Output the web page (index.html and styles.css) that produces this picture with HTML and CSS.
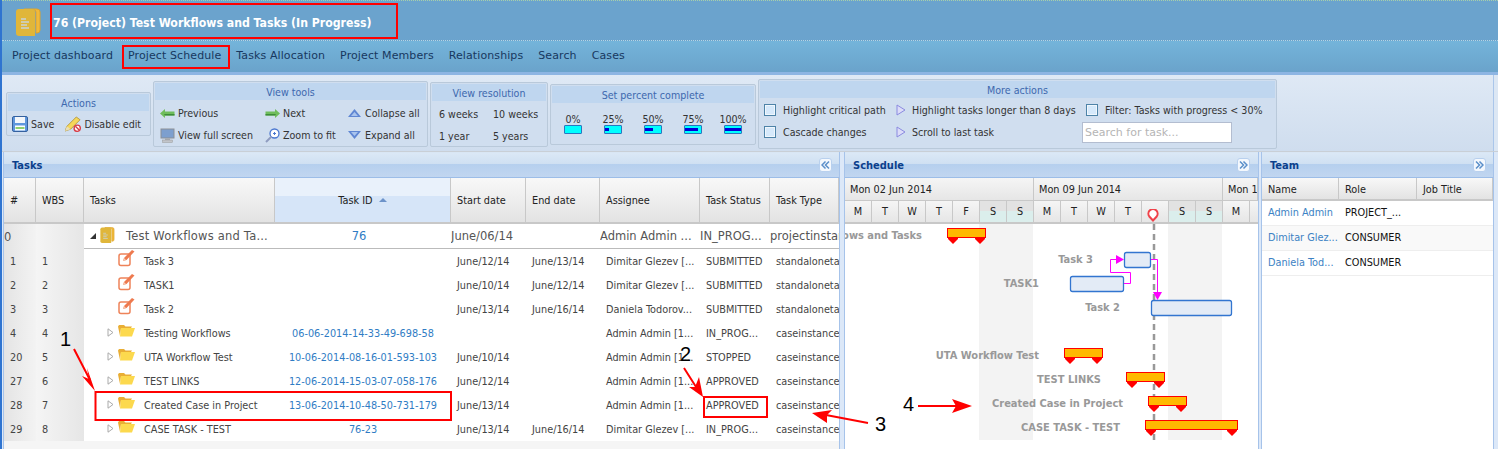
FILE: index.html
```html
<!DOCTYPE html>
<html lang="en">

<head>
    <meta charset="UTF-8">
    <title>Project Schedule</title>
    <link rel="stylesheet" href="styles.css">
</head>

<body>
    <!-- Shared icons -->
    <svg class="defs" width="0" height="0">
        <symbol id="i-book" viewBox="0 0 25 28">
            <path d="M8 1h13a3 3 0 0 1 3 3v18a3 3 0 0 1-3 3h-1V4a2 2 0 0 0-2-2H8z" fill="#f1b93a" stroke="#dca32e" />
            <path d="M3 1h13a3 3 0 0 1 3 3v24H3a3 3 0 0 1-3-3V4a3 3 0 0 1 3-3z" fill="#e0b63a" />
            <path d="M5 11h5M5 14h8M5 17h6M5 20h8" stroke="#c9d4d8" stroke-width="1.3" />
        </symbol>
        <symbol id="i-edit" viewBox="0 0 17 17">
            <rect x="1" y="4" width="11" height="11.5" rx="2" fill="#fff" stroke="#ee8359" stroke-width="1.5" />
            <path d="M5 11l1-3 8-8 2.500 1.500-8 8.500z" fill="#ee7a4f" />
            <path d="M5 11l1-3 2 2z" fill="#f8c9b3" />
        </symbol>
        <symbol id="i-folder" viewBox="0 0 17 13">
            <path d="M2 12L0 2.500 1 1h5l1.500 1.500H14L13 4H3z" fill="#e9ae35" />
            <path d="M3 4h14l-3 8.500H2z" fill="#fcd94e" />
        </symbol>
        <symbol id="i-open" viewBox="0 0 7 9">
            <path d="M1 .8L6 4.500 1 8.200z" fill="#fff" stroke="#aaa" />
        </symbol>
        <symbol id="i-play" viewBox="0 0 10 12">
            <path d="M1 1l8 5-8 5z" fill="#dcdcf8" stroke="#8a8ae0" />
        </symbol>
        <symbol id="i-left" viewBox="0 0 15 9">
            <path d="M0 4.500L5 0v2.500h9.500v4H5V9z" fill="#6fbd5d" />
            <path d="M5 6.500h9.500V5H4z" fill="#3d8c3a" />
        </symbol>
        <symbol id="i-chevrons" viewBox="0 0 9 9">
            <path d="M4.500 1L1 4.500 4.500 8M8 1L4.500 4.500 8 8" fill="none" stroke="#5b8fca" stroke-width="1.500" />
        </symbol>
        <path id="tick" d="M-5 0H5V1L0 6L-5 1Z" fill="#f00" />
    </svg>

    <div class="page">
        <header class="title-bar">
            <svg class="title-icon"><use href="#i-book" /></svg>
            <h1>76 (Project) Test Workflows and Tasks (In Progress)</h1>
        </header>

        <nav class="menu">
            <a>Project dashboard</a>
            <a>Project Schedule</a>
            <a>Tasks Allocation</a>
            <a>Project Members</a>
            <a>Relationships</a>
            <a>Search</a>
            <a>Cases</a>
        </nav>
        <div class="menu-edge"></div>

        <!-- Toolbar groups -->
        <section class="toolbar">
            <div class="group group-actions">
                <div class="group-title">Actions</div>
                <div class="tool-row">
                    <span class="tool">
                        <svg class="icon" viewBox="0 0 16 16">
                            <rect x=".5" y=".5" width="15" height="15" rx="1.500" fill="#5f97dd" stroke="#35619f" />
                            <rect x="3" y="1" width="10" height="6" fill="#f4f7fb" />
                            <rect x="3" y="9.500" width="10" height="5" fill="#fff" />
                            <rect x="3.500" y="11" width="9" height="2" fill="#8fcf6f" />
                        </svg>
                        Save
                    </span>
                    <span class="tool tool-edit">
                        <svg class="icon" viewBox="0 0 17 17">
                            <path d="M0 16l2-5L12 1l4 3L6 14z" fill="#f5d75a" stroke="#a98b2e" stroke-width=".8" />
                            <path d="M0 16l2-5 4 3z" fill="#eadfb8" />
                            <circle cx="13" cy="13" r="3.300" fill="#fff" stroke="#d8414a" stroke-width="1.500" />
                            <path d="M11 11l4 4" stroke="#d8414a" stroke-width="1.500" />
                        </svg>
                        Disable edit
                    </span>
                </div>
            </div>

            <div class="group group-view">
                <div class="group-title">View tools</div>
                <div class="view-grid">
                    <span class="tool"><svg class="icon arrow"><use href="#i-left" /></svg>Previous</span>
                    <span class="tool"><svg class="icon arrow flip"><use href="#i-left" /></svg>Next</span>
                    <span class="tool">
                        <svg class="icon tri" viewBox="0 0 13 8"><path d="M6.500 0L13 8H0z" fill="#5f86d3" /><path d="M6.500 3L10 7H3z" fill="#a9c4ee" /></svg>
                        Collapse all
                    </span>
                    <span class="tool">
                        <svg class="icon" viewBox="0 0 15 15">
                            <rect x="1" y="1" width="13" height="9" fill="#7d9fce" stroke="#8b8f96" />
                            <rect x="5" y="10" width="5" height="2" fill="#a9adb3" />
                            <rect x="2.500" y="12" width="10" height="2.500" fill="#c2c5ca" stroke="#999" stroke-width=".5" />
                        </svg>
                        View full screen
                    </span>
                    <span class="tool">
                        <svg class="icon" viewBox="0 0 15 15">
                            <circle cx="9.500" cy="5.500" r="4.500" fill="#fff" stroke="#4a77d0" stroke-width="1.300" />
                            <path d="M6.500 8.500L1 14" stroke="#8f9cc0" stroke-width="2" />
                            <path d="M8 5.500h3M9.500 4v3" stroke="#4a77d0" />
                        </svg>
                        Zoom to fit
                    </span>
                    <span class="tool">
                        <svg class="icon tri" viewBox="0 0 13 8"><path d="M6.500 8L13 0H0z" fill="#5f86d3" /><path d="M6.500 5L10 1H3z" fill="#a9c4ee" /></svg>
                        Expand all
                    </span>
                </div>
            </div>

            <div class="group group-res">
                <div class="group-title">View resolution</div>
                <div class="res-grid">
                    <span>6 weeks</span><span>10 weeks</span>
                    <span>1 year</span><span>5 years</span>
                </div>
            </div>

            <div class="group group-percent">
                <div class="group-title">Set percent complete</div>
                <div class="percent-row">
                    <div class="percent"><span>0%</span><div class="bar"><i style="width:0"></i></div></div>
                    <div class="percent"><span>25%</span><div class="bar"><i style="width:4px"></i></div></div>
                    <div class="percent"><span>50%</span><div class="bar"><i style="width:8px"></i></div></div>
                    <div class="percent"><span>75%</span><div class="bar"><i style="width:13px"></i></div></div>
                    <div class="percent"><span>100%</span><div class="bar"><i style="width:16px"></i></div></div>
                </div>
            </div>

            <div class="group group-more">
                <div class="group-title">More actions</div>
                <div class="more-grid">
                    <span class="tool"><i class="check"></i>Highlight critical path</span>
                    <span class="tool"><svg class="play"><use href="#i-play" /></svg>Highlight tasks longer than 8 days</span>
                    <span class="tool"><i class="check"></i>Filter: Tasks with progress &lt; 30%</span>
                    <span class="tool"><i class="check"></i>Cascade changes</span>
                    <span class="tool"><svg class="play"><use href="#i-play" /></svg>Scroll to last task</span>
                    <input class="search" placeholder="Search for task...">
                </div>
            </div>
        </section>

        <main class="panels">
            <!-- Tasks -->
            <section class="panel panel-tasks">
                <div class="panel-head">
                    <h2>Tasks</h2>
                    <svg class="collapse"><use href="#i-chevrons" /></svg>
                </div>
                <table class="tasks">
                    <colgroup>
                        <col class="c-num"><col class="c-wbs"><col class="c-name"><col class="c-id">
                        <col class="c-start"><col class="c-end"><col class="c-who"><col class="c-status"><col class="c-type">
                    </colgroup>
                    <thead>
                        <tr>
                            <th>#</th><th>WBS</th><th>Tasks</th>
                            <th class="sorted">Task ID <b class="sort-up"></b></th>
                            <th>Start date</th><th>End date</th><th>Assignee</th><th>Task Status</th><th>Task Type</th>
                        </tr>
                    </thead>
                    <tbody>
                        <tr class="root">
                            <td class="num">0</td><td class="wbs"></td>
                            <td><div class="tree tree-root"><b class="open-mark"></b><svg class="book"><use href="#i-book" /></svg>Test Workflows and Ta...</div></td>
                            <td class="id">76</td><td>June/06/14</td><td></td><td>Admin Admin ...</td><td>IN_PROG...</td><td>projectinstance</td>
                        </tr>
                        <tr>
                            <td class="num">1</td><td class="wbs">1</td>
                            <td><div class="tree"><svg class="edit"><use href="#i-edit" /></svg>Task 3</div></td>
                            <td class="id"></td><td>June/12/14</td><td>June/13/14</td><td>Dimitar Glezev [...</td><td>SUBMITTED</td><td>standalonetask</td>
                        </tr>
                        <tr>
                            <td class="num">2</td><td class="wbs">2</td>
                            <td><div class="tree"><svg class="edit"><use href="#i-edit" /></svg>TASK1</div></td>
                            <td class="id"></td><td>June/10/14</td><td>June/12/14</td><td>Dimitar Glezev [...</td><td>SUBMITTED</td><td>standalonetask</td>
                        </tr>
                        <tr>
                            <td class="num">3</td><td class="wbs">3</td>
                            <td><div class="tree"><svg class="edit"><use href="#i-edit" /></svg>Task 2</div></td>
                            <td class="id"></td><td>June/13/14</td><td>June/16/14</td><td>Daniela Todorov...</td><td>SUBMITTED</td><td>standalonetask</td>
                        </tr>
                        <tr>
                            <td class="num">4</td><td class="wbs">4</td>
                            <td><div class="tree"><svg class="open"><use href="#i-open" /></svg><svg class="folder"><use href="#i-folder" /></svg>Testing Workflows</div></td>
                            <td class="id">06-06-2014-14-33-49-698-58</td><td></td><td></td><td>Admin Admin [1...</td><td>IN_PROG...</td><td>caseinstance</td>
                        </tr>
                        <tr>
                            <td class="num">20</td><td class="wbs">5</td>
                            <td><div class="tree"><svg class="open"><use href="#i-open" /></svg><svg class="folder"><use href="#i-folder" /></svg>UTA Workflow Test</div></td>
                            <td class="id">10-06-2014-08-16-01-593-103</td><td>June/10/14</td><td></td><td>Admin Admin [1...</td><td>STOPPED</td><td>caseinstance</td>
                        </tr>
                        <tr>
                            <td class="num">27</td><td class="wbs">6</td>
                            <td><div class="tree"><svg class="open"><use href="#i-open" /></svg><svg class="folder"><use href="#i-folder" /></svg>TEST LINKS</div></td>
                            <td class="id">12-06-2014-15-03-07-058-176</td><td>June/12/14</td><td></td><td>Admin Admin [1...</td><td>APPROVED</td><td>caseinstance</td>
                        </tr>
                        <tr>
                            <td class="num">28</td><td class="wbs">7</td>
                            <td><div class="tree"><svg class="open"><use href="#i-open" /></svg><svg class="folder"><use href="#i-folder" /></svg>Created Case in Project</div></td>
                            <td class="id">13-06-2014-10-48-50-731-179</td><td>June/13/14</td><td></td><td>Admin Admin [1...</td><td>APPROVED</td><td>caseinstance</td>
                        </tr>
                        <tr>
                            <td class="num">29</td><td class="wbs">8</td>
                            <td><div class="tree"><svg class="open"><use href="#i-open" /></svg><svg class="folder"><use href="#i-folder" /></svg>CASE TASK - TEST</div></td>
                            <td class="id">76-23</td><td>June/13/14</td><td>June/16/14</td><td>Dimitar Glezev [...</td><td>IN_PROG...</td><td>caseinstance</td>
                        </tr>
                    </tbody>
                </table>
            </section>

            <!-- Schedule -->
            <section class="panel panel-schedule">
                <div class="panel-head">
                    <h2>Schedule</h2>
                    <svg class="collapse flip"><use href="#i-chevrons" /></svg>
                </div>
                <div class="weeks">
                    <span>Mon 02 Jun 2014</span>
                    <span>Mon 09 Jun 2014</span>
                    <span>Mon 16 Jun 2014</span>
                </div>
                <div class="days">
                    <span>M</span><span>T</span><span>W</span><span>T</span><span>F</span>
                    <span class="off">S</span><span class="off">S</span>
                    <span>M</span><span>T</span><span>W</span><span>T</span>
                    <span class="today">
                        <svg viewBox="0 0 12 13"><path d="M6 11.500L2.300 7.500a4.600 4.600 0 1 1 7.400 0z" fill="#fff" stroke="#f0424a" stroke-width="2" /></svg>
                    </span>
                    <span class="off">S</span><span class="off">S</span>
                    <span>M</span><span>T</span>
                </div>
                <svg class="gantt" viewBox="0 0 413 225">
                    <rect class="weekend" x="134" y="0" width="54" height="216" />
                    <rect class="weekend" x="323" y="0" width="54" height="216" />
                    <path class="today-line" d="M309 0V216" />

                    <text class="label" x="77" y="15">Test Workflows and Tasks</text>
                    <text class="label" x="248" y="39">Task 3</text>
                    <text class="label" x="194" y="63">TASK1</text>
                    <text class="label" x="275" y="87">Task 2</text>
                    <text class="label" x="194" y="135">UTA Workflow Test</text>
                    <text class="label" x="256" y="159">TEST LINKS</text>
                    <text class="label" x="278" y="183">Created Case in Project</text>
                    <text class="label" x="275" y="207">CASE TASK - TEST</text>

                    <rect class="task" x="279.500" y="28.500" width="26" height="15" rx="2" />
                    <rect class="task" x="225.500" y="52.500" width="53" height="15" rx="2" />
                    <rect class="task" x="306.500" y="76.500" width="80" height="15" rx="2" />

                    <rect class="case" x="102.500" y="4.500" width="38" height="9" />
                    <rect class="case" x="219.500" y="124.500" width="38" height="9" />
                    <rect class="case" x="281.500" y="148.500" width="38" height="9" />
                    <rect class="case" x="303.500" y="172.500" width="38" height="9" />
                    <rect class="case" x="300.500" y="196.500" width="92" height="9" />

                    <use href="#tick" x="108" y="14" /><use href="#tick" x="135" y="14" />
                    <use href="#tick" x="225" y="134" /><use href="#tick" x="252" y="134" />
                    <use href="#tick" x="287" y="158" /><use href="#tick" x="314" y="158" />
                    <use href="#tick" x="309" y="182" /><use href="#tick" x="336" y="182" />
                    <use href="#tick" x="306" y="206" /><use href="#tick" x="387" y="206" />

                    <path class="link" d="M279 59.500h6.500V48.500H265.500V35.500H272" />
                    <path class="link-head" d="M271 31l8 4.500-8 4.500z" />
                    <path class="link" d="M306 35.500h6.500V69" />
                    <path class="link-head" d="M308 68h9l-4.500 8z" />
                </svg>
            </section>

            <!-- Team -->
            <section class="panel panel-team">
                <div class="panel-head">
                    <h2>Team</h2>
                    <svg class="collapse flip"><use href="#i-chevrons" /></svg>
                </div>
                <table class="team">
                    <colgroup><col class="t-name"><col class="t-role"><col class="t-job"></colgroup>
                    <thead>
                        <tr><th>Name</th><th>Role</th><th>Job Title</th></tr>
                    </thead>
                    <tbody>
                        <tr><td class="person">Admin Admin</td><td>PROJECT_...</td><td></td></tr>
                        <tr><td class="person">Dimitar Glez...</td><td>CONSUMER</td><td></td></tr>
                        <tr><td class="person">Daniela Tod...</td><td>CONSUMER</td><td></td></tr>
                    </tbody>
                </table>
            </section>
        </main>

        <!-- Red callouts drawn over the screenshot -->
        <svg class="marks" viewBox="0 0 1498 449">
            <rect x="51" y="4" width="346" height="34" />
            <rect x="123" y="46" width="106" height="22" />
            <rect x="95.500" y="392" width="355.500" height="28" />
            <rect x="704" y="397" width="63" height="20" />

            <path d="M74 349L90 380M684 368L698 390M868 423L826 415M918 406H958" />
            <polygon points="95,391 82,376 89,379 87,368" />
            <polygon points="703,397 689,387 695,387 699,377" />
            <polygon points="812,413 832,410 827,415 827,423" />
            <polygon points="972,406 952,399 956,406 952,413" />

            <text x="60" y="346">1</text>
            <text x="680" y="361">2</text>
            <text x="875" y="431">3</text>
            <text x="903" y="411">4</text>
        </svg>
    </div>
</body>

</html>
```

FILE: styles.css
```css
/* Page */
body {
    margin: 0;
    font-family: "DejaVu Sans Condensed", "DejaVu Sans", sans-serif;
    font-size: 10.8px;
    color: #333;
}

.defs {
    position: absolute;
}

.page {
    position: relative;
    width: 1498px;
    height: 449px;
    overflow: hidden;
    box-sizing: border-box;
    border-left: 2px solid #2f74d0;
    background: #dce7f4;
}

/* Title + menu */
.title-bar {
    display: flex;
    align-items: center;
    height: 41px;
    box-sizing: border-box;
    padding: 4px 0 0 14px;
    background: #6ba3cd;
    border-top: 1px dotted #a7cfa9;
    border-bottom: 1px dotted #b5d5e4;
}

.title-icon {
    width: 25px;
    height: 28px;
    margin-top: -2px;
}

h1 {
    margin: 0 0 0 12px;
    font-size: 12.2px;
    font-weight: bold;
    color: #fff;
}

.menu {
    display: flex;
    align-items: center;
    gap: 15px;
    height: 31px;
    padding: 0 0 2px 10px;
    box-sizing: border-box;
    background: linear-gradient(#74b4da, #6aa3cb);
    font-family: "DejaVu Sans", sans-serif;
    font-size: 11px;
    letter-spacing: .1px;
    color: #17385f;
}

.menu-edge {
    height: 3px;
    background: #8db5e3;
}

/* Toolbar */
.toolbar {
    display: flex;
    align-items: center;
    gap: 2px;
    height: 76px;
    padding: 2px 0 0 4px;
    box-sizing: border-box;
    font-size: 10.6px;
    background: linear-gradient(#dfe9f5, #cfddee);
    border-right: 1px solid #aac6ea;
    margin-right: 4px;
}

.group {
    box-sizing: border-box;
    background: #d0deef;
    border: 1px solid #b9c9da;
    border-radius: 2px;
    padding: 1px;
}

.group-title {
    height: 17px;
    line-height: 18px;
    text-align: center;
    color: #3d68ae;
    background: #bfd6ef;
}

.group-actions { width: 145px; height: 44px; }
.group-view { width: 275px; height: 66px; }
.group-res { width: 118px; height: 65px; }
.group-percent { width: 206px; height: 61px; }
.group-more { width: 519px; height: 70px; }

.tool {
    display: flex;
    align-items: center;
    white-space: nowrap;
}

.icon {
    flex: none;
    width: 15px;
    height: 15px;
    margin-right: 3px;
}

.icon.arrow {
    height: 9px;
}

.icon.tri {
    width: 13px;
    height: 8px;
    margin-right: 4px;
}

.flip {
    transform: scaleX(-1);
}

.tool-row {
    display: flex;
    gap: 11px;
    padding: 5px 0 0 4px;
}

.tool-row .icon {
    width: 16px;
    height: 16px;
}

.view-grid {
    display: grid;
    grid-template-columns: 105px 83px auto;
    grid-auto-rows: 22px;
    align-items: center;
    padding: 2px 0 0 5px;
}

.res-grid {
    display: grid;
    grid-template-columns: 54px auto;
    grid-auto-rows: 22px;
    align-items: center;
    padding: 2px 0 0 7px;
}

.percent-row {
    display: flex;
    padding: 10px 0 0 1px;
}

.percent {
    display: flex;
    flex-direction: column;
    align-items: center;
    width: 40px;
    line-height: 12px;
}

.bar {
    width: 16px;
    height: 3px;
    padding: 2px 0;
    background: #0ff;
    border: 1px solid #2a76c0;
    border-radius: 1px;
}

.bar i {
    display: block;
    height: 3px;
    background: #0000d8;
}

.more-grid {
    display: grid;
    grid-template-columns: 132px 190px auto;
    grid-auto-rows: 22px;
    align-items: center;
    padding: 1px 0 0 4px;
}

.check {
    flex: none;
    width: 10px;
    height: 10px;
    margin-right: 7px;
    border: 1px solid #4e83a8;
    background: #d6e9fb;
    box-shadow: inset 0 0 0 1px #f0f7fd;
}

.play {
    flex: none;
    width: 10px;
    height: 12px;
    margin-right: 6px;
}

.search {
    width: 150px;
    height: 21px;
    box-sizing: border-box;
    margin-left: -4px;
    padding: 0 2px;
    font-family: "DejaVu Sans", sans-serif;
    font-size: 11px;
    background: #fff;
    border: 1px solid #b3bdd0;
}

.search::placeholder {
    color: #b5b5b5;
}

/* Panels */
.panels {
    display: flex;
    height: 299px;
    background: #dce8f8;
    border-top: 1px solid #c9cfd6;
    padding-left: 1px;
}

.panel {
    box-sizing: border-box;
    flex: none;
    position: relative;
    background: #fff;
    border-left: 1px solid #a6c3ea;
    border-right: 1px solid #a6c3ea;
}

.panel-tasks { width: 837px; background: #f5f5f5; }
.panel-schedule { width: 415px; margin-left: 4px; }
.panel-team { width: 233px; margin-left: 2px; }

.panel-head {
    display: flex;
    justify-content: space-between;
    align-items: center;
    height: 26px;
    box-sizing: border-box;
    padding: 0 7px 0 8px;
    background: linear-gradient(#dbe8f6, #cfe0f2 45%, #b5cfee 46%, #c1d6f0);
    border-top: 1px solid #d9e6f4;
    border-bottom: 1px solid #9cbde8;
}

.panel-schedule .panel-head {
    padding-right: 8px;
}

h2 {
    margin: 0;
    font-size: 11px;
    font-weight: bold;
    color: #0b3f8c;
}

.collapse {
    width: 13px;
    height: 14px;
    padding: 1px;
    box-sizing: border-box;
    background: #f4f8fd;
    border: 1px solid #b8d0ee;
    border-radius: 3px;
}

/* Tables */
table {
    width: 100%;
    table-layout: fixed;
    border-spacing: 0;
}

th {
    box-sizing: border-box;
    height: 46px;
    padding: 0 0 0 6px;
    text-align: left;
    font-weight: normal;
    color: #222;
    background: linear-gradient(#f8f8f8, #e3e3e3);
    border-right: 1px solid #c8c8c8;
    border-bottom: 2px solid #c8c8c8;
}

td {
    box-sizing: border-box;
    height: 24px;
    padding: 0 0 0 6px;
    white-space: nowrap;
    overflow: hidden;
    color: #444;
    background: #fff;
}

.c-num { width: 32px; }
.c-wbs { width: 48px; }
.c-name { width: 191px; }
.c-id { width: 176px; }
.c-start { width: 75px; }
.c-end { width: 74px; }
.c-who { width: 100px; }
.c-status { width: 70px; }
.c-type { width: 69px; }

th.sorted {
    padding: 0;
    text-align: center;
    background: linear-gradient(#e9f1fb 40%, #d6e5f8 40%);
}

.sort-up {
    display: inline-block;
    margin-left: 3px;
    vertical-align: 2px;
    border: 4px solid transparent;
    border-top: 0;
    border-bottom: 4px solid #6d93c9;
}

td.num {
    background: linear-gradient(90deg, #e4e4e4, #f3f3f3);
}

td.wbs {
    background: linear-gradient(90deg, #f5f5f5, #e6e6e6);
}

td.id {
    padding: 0;
    text-align: center;
    color: #2f7cc4;
}

.tree {
    display: flex;
    align-items: center;
    height: 24px;
    padding-left: 17px;
}

.tree svg {
    flex: none;
}

.open {
    width: 7px;
    height: 9px;
    margin: -2px 4px 0 0;
}

.folder {
    width: 17px;
    height: 13px;
    margin: -6px 9px 0 0;
}

.edit {
    width: 17px;
    height: 17px;
    margin: -6px 9px 0 11px;
}

/* Top row of the tree is bigger and has no padding */
.root td {
    height: 25px;
    padding: 0;
    font-family: "DejaVu Sans", sans-serif;
    font-size: 11.5px;
    color: #555;
    border-bottom: 1px solid #bbb;
}

.root td.num,
.root td.wbs {
    border-bottom: 0;
}

.root td.id {
    padding-right: 8px;
    color: #2f7cc4;
}

.tree-root {
    height: 24px;
    padding-left: 6px;
    letter-spacing: .2px;
}

.open-mark {
    width: 0;
    height: 0;
    margin-right: 4px;
    border: 3px solid transparent;
    border-right-color: #333;
    border-bottom-color: #333;
}

.book {
    width: 15px;
    height: 16px;
    margin: -2px 11px 0 0;
}

/* Schedule */
.weeks {
    display: grid;
    grid-template-columns: 189px 189px 35px;
    height: 23px;
    overflow: hidden;
}

.weeks span {
    display: flex;
    align-items: center;
    padding-left: 5px;
    white-space: nowrap;
    overflow: hidden;
    color: #222;
    background: linear-gradient(#f5f5f5, #e6e6e6);
    border-right: 1px solid #c8c8c8;
    border-bottom: 1px solid #c8c8c8;
}

.days {
    display: grid;
    grid-template-columns: repeat(16, 27px);
    height: 23px;
    overflow: hidden;
}

.days span {
    display: flex;
    align-items: center;
    justify-content: center;
    box-sizing: border-box;
    color: #222;
    background: linear-gradient(#f5f5f5, #e6e6e6);
    border-right: 1px solid #c8c8c8;
    border-bottom: 2px solid #c8c8c8;
}

.days span.off {
    background: linear-gradient(#e2e2e2 50%, #dbeeec 50%);
}

.days .today svg {
    width: 12px;
    height: 13px;
    margin: 8px 4px 0 0;
}

.gantt {
    display: block;
    width: 413px;
    height: 225px;
}

.weekend {
    fill: #f3f3f3;
}

.today-line {
    fill: none;
    stroke: #999;
    stroke-width: 2.500;
    stroke-dasharray: 6 4;
}

.label {
    font-size: 11px;
    font-weight: bold;
    fill: #999;
    text-anchor: end;
}

.task {
    fill: #e3ebf6;
    stroke: #3275d0;
    stroke-width: 1.300;
}

.case {
    fill: #ffb900;
    stroke: #f00;
}

.link {
    fill: none;
    stroke: #f0f;
}

.link-head {
    fill: #f0f;
}

/* Team */
.panel-team th {
    height: 23px;
    padding-top: 1px;
}

.t-name { width: 77px; }
.t-role { width: 78px; }

.team td {
    height: 25px;
    padding-bottom: 2px;
    color: #111;
    border-bottom: 1px solid #eee;
}

.team tr:nth-child(2) td {
    background: #f9f9f9;
}

.team td.person {
    color: #3c82c4;
}

/* Callouts */
.marks {
    position: absolute;
    left: -2px;
    top: 0;
    width: 1498px;
    height: 449px;
    pointer-events: none;
}

.marks rect,
.marks path {
    fill: none;
    stroke: #f00;
    stroke-width: 2;
}

.marks polygon {
    fill: #f00;
}

.marks text {
    font-family: "Liberation Sans", sans-serif;
    font-size: 20px;
    fill: #000;
}
```
